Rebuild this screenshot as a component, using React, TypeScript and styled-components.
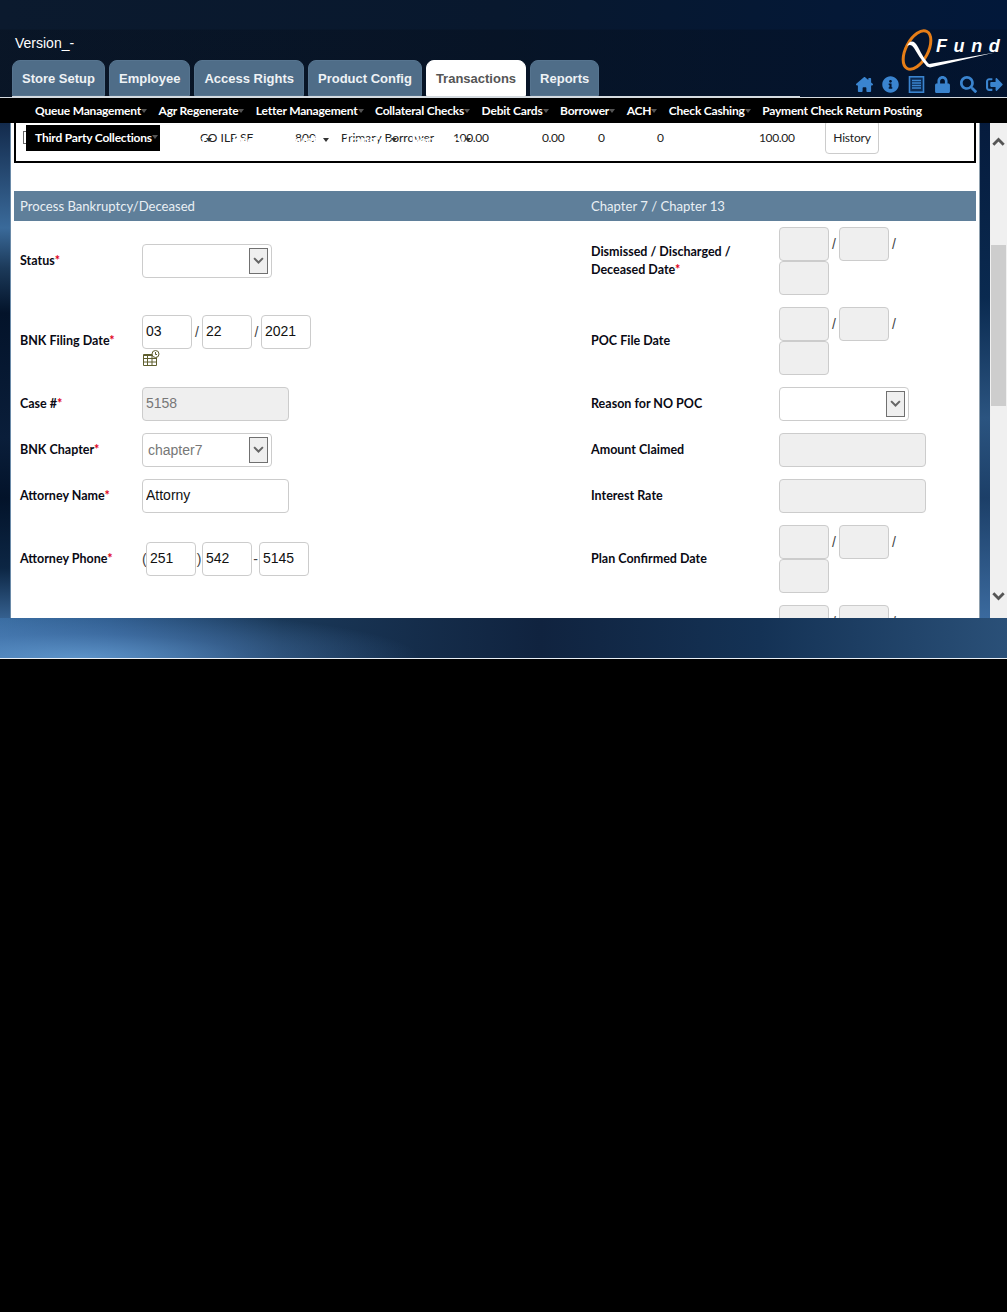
import React from 'react';
import styled, { createGlobalStyle } from 'styled-components';
import { FaInfoCircle, FaLock, FaSearch, FaSignOutAlt } from 'react-icons/fa';
import { FaHouseChimney } from 'react-icons/fa6';

const GlobalStyle = createGlobalStyle`
    html, body {
        margin: 0;
        background: #000;
    }
    * {
        box-sizing: border-box;
    }
`;

const Page = styled.div`
    width: 1007px;
    height: 1312px;
    background: #000;
`;

const Shell = styled.div`
    height: 659px;
    border-bottom: 1px solid #e8eef4;
    display: flex;
    flex-direction: column;
    background-color: #10233f;
    background-repeat: no-repeat;
    background-image:
        linear-gradient(180deg, #0a1c36 0, #12294a 22px, #3a6a9a 130px, #1c3a5a 170px, #03132a 215px, #0a1e3a 340px, #03132a 400px, #0c2644 470px, #35608f 520px),
        linear-gradient(180deg, #05193a 0, #0a2a50 200px, #2b5480 320px, #1c3f68 400px, #3b6a9e 520px),
        radial-gradient(ellipse 340px 48px at 80px 100%, rgba(104, 160, 214, 0.8) 0, rgba(90, 140, 200, 0.38) 50%, rgba(70, 120, 180, 0) 100%),
        linear-gradient(90deg, #376a9e 0, #2c598a 110px, #1a3858 280px, #10233f 540px, #143255 760px, #2a5078 1007px),
        linear-gradient(180deg, rgba(0, 0, 0, 0) 29px, rgba(4, 8, 16, 0.25) 30px),
        linear-gradient(90deg, #0b1a2e 0, #08182e 500px, #02183a 1007px);
    background-size: 10px 520px, 27px 520px, 100% 40px, 100% 40px, 100% 98px, 100% 98px;
    background-position: 0 98px, 100% 98px, 0 618px, 0 618px, 0 0, 0 0;
`;

const Header = styled.header`
    height: 98px;
    flex: none;
    display: flex;
    justify-content: space-between;
    border-bottom: 1px solid #d5dbe0;
`;

const HeaderLeft = styled.div`
    width: 788px;
    margin-left: 12px;
    padding-top: 36px;
    height: 97px;
    border-bottom: 1px solid #d5dbe0;
`;

const Version = styled.div`
    margin: 0 0 10px 3px;
    font: 14px/14px 'Liberation Sans', Arial, sans-serif;
    color: #fff;
`;

const Tabs = styled.nav`
    display: flex;
    gap: 4px;
`;

const Tab = styled.a<{ $active?: boolean }>`
    height: 36px;
    padding: 0 9px;
    display: flex;
    align-items: center;
    border-radius: 8px 8px 0 0;
    border: 1px solid ${(p) => (p.$active ? '#fff' : '#56748f')};
    background: ${(p) => (p.$active ? '#fff' : '#4f6d88')};
    color: ${(p) => (p.$active ? '#555' : '#eef2f5')};
    font: bold 13px 'Liberation Sans', Arial, sans-serif;
`;

const HeaderRight = styled.div`
    width: 157px;
    padding-top: 29px;
    display: flex;
    flex-direction: column;
    align-items: flex-end;
`;

const Logo = styled.svg`
    display: block;
    width: 107px;
    height: 42px;
`;

const IconRow = styled.div`
    margin-top: 5px;
    padding-right: 4px;
    display: flex;
    align-items: center;
    color: #3a84cf;
    gap: 9px;

    svg {
        display: block;
        width: 17px;
        height: 17px;
    }
`;

const MenuBar = styled.nav`
    position: relative;
    height: 25px;
    flex: none;
    padding-left: 35px;
    display: flex;
    align-items: center;
    gap: 11.5px;
    background: #000;
    z-index: 5;
`;

const MenuItem = styled.span<{ $plain?: boolean }>`
    display: inline-flex;
    align-items: center;
    color: #fff;
    font: bold 12px 'Lato', sans-serif;
    letter-spacing: -0.2px;
    white-space: nowrap;

    &::after {
        content: '';
        display: ${(p) => (p.$plain ? 'none' : 'block')};
        width: 0;
        height: 0;
        border: 3px solid transparent;
        border-top: 4px solid #555;
        border-bottom: 0;
    }
`;

const Dropdown = styled.div`
    position: absolute;
    left: 26px;
    top: 27px;
    width: 134px;
    height: 26px;
    padding: 0 0 2px 9px;
    display: flex;
    align-items: center;
    background: #000;
`;

const Body = styled.div`
    height: 495px;
    display: flex;
    padding-left: 10px;
    gap: 10px;
`;

const Panel = styled.main`
    width: 970px;
    height: 495px;
    overflow: hidden;
    background: #fff;
    border-left: 1px solid #6a8aa8;
    border-right: 1px solid #8fa0ae;
`;

const SummaryBox = styled.section`
    position: relative;
    margin: -12px 3px 28px;
    height: 52px;
    border: 2px solid #000;
`;

const SummaryRow = styled.div`
    height: 100%;
    padding: 0 0 0 7px;
    display: grid;
    grid-template-columns: 177px 95px 46px 112px 89px 56px 59px 102px 66px auto;
    align-items: center;
    font: 12px 'Lato', sans-serif;
    color: #222;
`;

const Amount = styled.span`
    letter-spacing: -0.35px;
`;

const Checkbox = styled.span`
    display: block;
    width: 13px;
    height: 13px;
    border: 1px solid #666;
`;

const HistoryButton = styled.span`
    width: 54px;
    height: 34px;
    display: flex;
    align-items: center;
    justify-content: center;
    border: 1px solid #ccc;
    border-radius: 4px;
    font: 12px 'Lato', sans-serif;
    letter-spacing: -0.2px;
    color: #222;
`;

const GhostMenu = styled.div`
    position: absolute;
    top: 19px;
    left: 144px;
    display: flex;
    gap: 12px;
`;

const GhostItem = styled.span<{ $width: number }>`
    width: ${(p) => p.$width}px;
    display: inline-flex;
    align-items: center;
    justify-content: flex-end;
    overflow: hidden;
    color: #fff;
    font: bold 13px/16px 'Lato', sans-serif;
    white-space: nowrap;

    &::after {
        content: '';
        flex: none;
        border: 3px solid transparent;
        border-top: 4px solid #333;
        border-bottom: 0;
    }
`;

const SectionBar = styled.div`
    margin: 0 3px;
    height: 30px;
    padding-bottom: 1px;
    display: grid;
    grid-template-columns: 571px 1fr;
    align-items: center;
    background: #5f7f9a;
    color: #e9eff4;
    font: 13.1px 'Lato', sans-serif;
`;

const SectionTitle = styled.span`
    padding-left: 6px;
`;

const Rows = styled.div`
    margin: 0 3px;
    display: grid;
    grid-template-columns: 6px 122px 437px 12px 188px 1fr;
`;

const FormRow = styled.div<{ $tall?: boolean }>`
    grid-column: 1 / -1;
    height: ${(p) => (p.$tall ? 80 : 46)}px;
    display: grid;
    grid-template-columns: subgrid;
    align-items: center;
`;

const Label = styled.label<{ $col: number }>`
    grid-column: ${(p) => p.$col};
    padding-bottom: 1px;
    font: bold 12.5px/18px 'Lato', sans-serif;
    color: #0a0a14;
`;

const Required = styled.span`
    color: #e00020;
`;

const Cell = styled.div<{ $col: number }>`
    grid-column: ${(p) => p.$col};
`;

const Input = styled.input<{ $width?: number; $disabled?: boolean }>`
    display: block;
    flex: none;
    width: ${(p) => p.$width ?? 147}px;
    height: 34px;
    padding: 0 3px 2px;
    border: 1px solid #ccc;
    border-radius: 4px;
    outline: none;
    background: ${(p) => (p.$disabled ? '#efefef' : '#fff')};
    color: ${(p) => (p.$disabled ? '#777' : '#111')};
    font: 14px 'Liberation Sans', Arial, sans-serif;
`;

const SelectBox = styled.div`
    width: 130px;
    height: 34px;
    padding: 0 3px 0 5px;
    display: flex;
    align-items: center;
    justify-content: space-between;
    border: 1px solid #ccc;
    border-radius: 4px;
    background: #fff;
    color: #777;
    font: 14px 'Liberation Sans', Arial, sans-serif;
`;

const SelectArrow = styled.span`
    width: 19px;
    height: 26px;
    margin-left: auto;
    display: flex;
    align-items: center;
    justify-content: center;
    border: 1px solid #707070;
    background: #efefef;
`;

const Fields = styled.div<{ $wrap?: boolean }>`
    display: flex;
    flex-wrap: ${(p) => (p.$wrap ? 'wrap' : 'nowrap')};
    width: ${(p) => (p.$wrap ? '130px' : 'auto')};
    align-items: center;
    color: #444;
    font: 14px 'Liberation Sans', Arial, sans-serif;
`;

const Sep = styled.span<{ $width: number }>`
    width: ${(p) => p.$width}px;
    flex: none;
    text-align: center;
`;

const CalendarIcon = styled.svg`
    display: block;
    width: 18px;
    height: 17px;
    margin-top: 1px;
`;

const ScrollTrack = styled.div`
    width: 17px;
    height: 495px;
    display: flex;
    flex-direction: column;
    background: #f0f0f0;
`;

const ArrowSlot = styled.div<{ $height: number }>`
    height: ${(p) => p.$height}px;
    display: flex;
    align-items: center;
    justify-content: center;
`;

const Thumb = styled.div`
    height: 161px;
    margin: 84px 1px 0;
    background: #cdcdcd;
`;

const Spacer = styled.div`
    flex: 1;
`;

const Chevron = ({ up, color, size, weight }: { up?: boolean; color: string; size: number; weight: number }) => (
    <svg width={size} height={size * 0.7} viewBox="0 0 10 7" fill="none">
        <path d={up ? 'M1 6 L5 2 L9 6' : 'M1 1 L5 5 L9 1'} stroke={color} strokeWidth={weight} />
    </svg>
);

const ListIcon = () => (
    <svg viewBox="0 0 17 17" fill="none" stroke="currentColor">
        <rect x="1.5" y="0.8" width="14" height="15.4" strokeWidth="1.6" fill="#0b2a52" />
        <path d="M4 4.5 H13 M4 7 H13 M4 9.5 H13 M4 12 H13" strokeWidth="1.3" />
    </svg>
);

const Select = ({ value }: { value?: string }) => (
    <SelectBox>
        {value}
        <SelectArrow>
            <Chevron color="#666" size={11} weight={1.8} />
        </SelectArrow>
    </SelectBox>
);

const DateFields = () => (
    <Fields $wrap>
        <Input $width={50} $disabled readOnly />
        <Sep $width={10}>/</Sep>
        <Input $width={50} $disabled readOnly />
        <Sep $width={10}>/</Sep>
        <Input $width={50} $disabled readOnly />
    </Fields>
);

const menu = [
    'Queue Management',
    'Agr Regenerate',
    'Letter Management',
    'Collateral Checks',
    'Debit Cards',
    'Borrower',
    'ACH',
    'Check Cashing',
];

const tabs = ['Store Setup', 'Employee', 'Access Rights', 'Product Config', 'Transactions', 'Reports'];

const App = () => {
    return (
        <Page>
            <GlobalStyle />
            <Shell>
                <Header>
                    <HeaderLeft>
                        <Version>Version_-</Version>
                        <Tabs>
                            {tabs.map((t) => (
                                <Tab key={t} $active={t === 'Transactions'}>
                                    {t}
                                </Tab>
                            ))}
                        </Tabs>
                    </HeaderLeft>
                    <HeaderRight>
                        <Logo viewBox="0 0 107 42">
                            <ellipse cx="17" cy="21" rx="11" ry="21" transform="rotate(28 17 21)" fill="none" stroke="#e67e17" strokeWidth="3" />
                            <path d="M7 17 C10 11 14 11 18 18 C22 26 25 31 29 35 L95 23.5 L30 38.5 L27 37.5 C21 31 17 24 14 19 C12 16 10 15 7 17 Z" fill="#fff" />
                            <text x="36" y="23" fill="#fff" fontFamily="'Liberation Sans', Arial, sans-serif" fontSize="18" fontWeight="bold" fontStyle="italic" letterSpacing="6.6">
                                Fund
                            </text>
                        </Logo>
                        <IconRow>
                            <FaHouseChimney />
                            <FaInfoCircle />
                            <ListIcon />
                            <FaLock />
                            <FaSearch />
                            <FaSignOutAlt />
                        </IconRow>
                    </HeaderRight>
                </Header>
                <MenuBar>
                    {menu.map((m) => (
                        <MenuItem key={m}>{m}</MenuItem>
                    ))}
                    <MenuItem $plain>Payment Check Return Posting</MenuItem>
                    <Dropdown>
                        <MenuItem>Third Party Collections</MenuItem>
                    </Dropdown>
                </MenuBar>
                <Body>
                    <Panel>
                        <SummaryBox>
                            <SummaryRow>
                                <Checkbox />
                                <span>CO ILP SF</span>
                                <span>800</span>
                                <span>Primary Borrower</span>
                                <Amount>100.00</Amount>
                                <Amount>0.00</Amount>
                                <span>0</span>
                                <span>0</span>
                                <Amount>100.00</Amount>
                                <HistoryButton>History</HistoryButton>
                            </SummaryRow>
                            <GhostMenu aria-hidden="true">
                                <GhostItem $width={52}>Placement</GhostItem>
                                <GhostItem $width={105}>Recall Accounts</GhostItem>
                                <GhostItem $width={56}>Transfer</GhostItem>
                                <GhostItem $width={62}>Recovery</GhostItem>
                            </GhostMenu>
                        </SummaryBox>
                        <SectionBar>
                            <SectionTitle>Process Bankruptcy/Deceased</SectionTitle>
                            <SectionTitle>Chapter 7 / Chapter 13</SectionTitle>
                        </SectionBar>
                        <Rows>
                            <FormRow $tall>
                                <Label $col={2}>Status<Required>*</Required></Label>
                                <Cell $col={3}><Select /></Cell>
                                <Label $col={5}>Dismissed / Discharged /<br />Deceased Date<Required>*</Required></Label>
                                <Cell $col={6}><DateFields /></Cell>
                            </FormRow>
                            <FormRow $tall>
                                <Label $col={2}>BNK Filing Date<Required>*</Required></Label>
                                <Cell $col={3}>
                                    <Fields>
                                        <Input $width={50} defaultValue="03" />
                                        <Sep $width={10}>/</Sep>
                                        <Input $width={50} defaultValue="22" />
                                        <Sep $width={9}>/</Sep>
                                        <Input $width={50} defaultValue="2021" />
                                    </Fields>
                                    <CalendarIcon viewBox="0 0 18 17" fill="none" stroke="#5f5f2e" strokeWidth="1">
                                        <path d="M1.5 4.5 H14.5 V15.5 H1.5 Z M1.5 5.5 H14.5 M1.5 8.5 H14.5 M1.5 12 H14.5 M5.5 4.5 V15.5 M10 4.5 V15.5" />
                                        <circle cx="13.5" cy="4" r="3.5" fill="#fff" />
                                        <path d="M13.5 2 V4.5 H15" />
                                    </CalendarIcon>
                                </Cell>
                                <Label $col={5}>POC File Date</Label>
                                <Cell $col={6}><DateFields /></Cell>
                            </FormRow>
                            <FormRow>
                                <Label $col={2}>Case #<Required>*</Required></Label>
                                <Cell $col={3}><Input $disabled defaultValue="5158" readOnly /></Cell>
                                <Label $col={5}>Reason for NO POC</Label>
                                <Cell $col={6}><Select /></Cell>
                            </FormRow>
                            <FormRow>
                                <Label $col={2}>BNK Chapter<Required>*</Required></Label>
                                <Cell $col={3}><Select value="chapter7" /></Cell>
                                <Label $col={5}>Amount Claimed</Label>
                                <Cell $col={6}><Input $disabled readOnly /></Cell>
                            </FormRow>
                            <FormRow>
                                <Label $col={2}>Attorney Name<Required>*</Required></Label>
                                <Cell $col={3}><Input defaultValue="Attorny" /></Cell>
                                <Label $col={5}>Interest Rate</Label>
                                <Cell $col={6}><Input $disabled readOnly /></Cell>
                            </FormRow>
                            <FormRow $tall>
                                <Label $col={2}>Attorney Phone<Required>*</Required></Label>
                                <Cell $col={3}>
                                    <Fields>
                                        <Sep $width={4}>(</Sep>
                                        <Input $width={50} defaultValue="251" />
                                        <Sep $width={6}>)</Sep>
                                        <Input $width={50} defaultValue="542" />
                                        <Sep $width={7}>-</Sep>
                                        <Input $width={50} defaultValue="5145" />
                                    </Fields>
                                </Cell>
                                <Label $col={5}>Plan Confirmed Date</Label>
                                <Cell $col={6}><DateFields /></Cell>
                            </FormRow>
                            <FormRow $tall>
                                <Cell $col={6}><DateFields /></Cell>
                            </FormRow>
                        </Rows>
                    </Panel>
                    <ScrollTrack>
                        <ArrowSlot $height={38}>
                            <Chevron up color="#555" size={13} weight={2.2} />
                        </ArrowSlot>
                        <Thumb />
                        <Spacer />
                        <ArrowSlot $height={43}>
                            <Chevron color="#555" size={13} weight={2.2} />
                        </ArrowSlot>
                    </ScrollTrack>
                </Body>
            </Shell>
        </Page>
    );
};

export default App;
